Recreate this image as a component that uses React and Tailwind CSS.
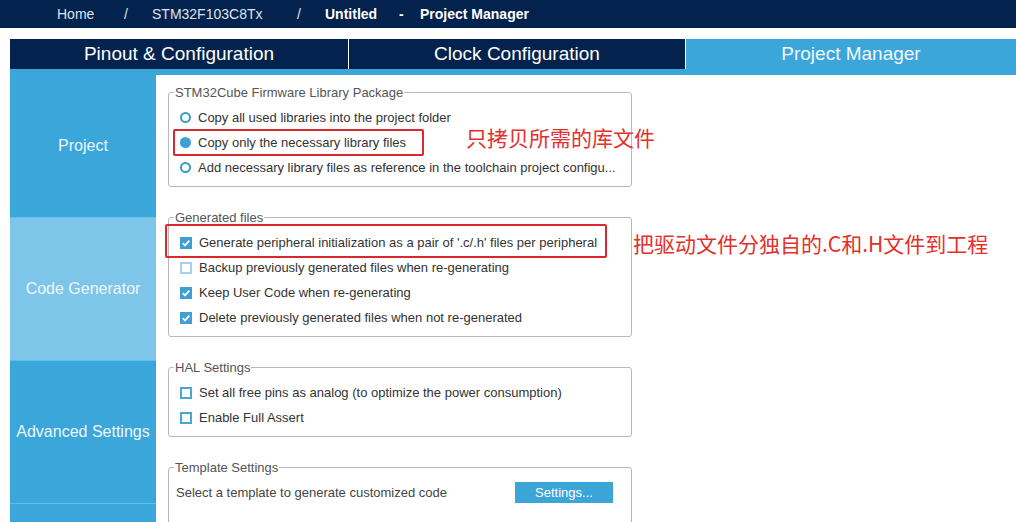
import React from 'react'

const Radio = ({ checked }) =>
  checked ? (
    <span className="w-[11px] h-[11px] rounded-full bg-[#3c9fd6] shrink-0" />
  ) : (
    <span className="w-[11px] h-[11px] rounded-full border-2 border-[#3a9cc9] bg-white shrink-0" />
  )

const Check = ({ checked, light }) =>
  checked ? (
    <span className="w-[12px] h-[12px] bg-[#3f9fd2] shrink-0 flex items-center justify-center">
      <svg width="10" height="10" viewBox="0 0 10 10">
        <path d="M1.8 5.2 L4 7.4 L8.4 2.6" fill="none" stroke="white" strokeWidth="1.7" />
      </svg>
    </span>
  ) : (
    <span className={`w-[12px] h-[12px] border-2 bg-white shrink-0 ${light ? 'border-[#a5d2ea]' : 'border-[#4aa6d4]'}`} />
  )

const Group = ({ title, height, children }) => (
  <div className={`relative border border-[#b9b9b9] rounded-[3px] w-[464px] pl-[11px] pt-[12px] ${height}`}>
    <span className="absolute -top-[8px] left-[5px] bg-white px-[1px] text-[13px] leading-[15px] text-[#555]">
      {title}
    </span>
    {children}
  </div>
)

const Row = ({ icon, children }) => (
  <div className="relative h-[25px] flex items-center gap-[7px] text-[13px] text-[#333]">
    {icon}
    <span>{children}</span>
  </div>
)

const sideItems = [
  { label: 'Project', active: false },
  { label: 'Code Generator', active: true },
  { label: 'Advanced Settings', active: false },
  { label: '', active: false },
]

export default function App() {
  return (
    <div className="w-[1016px] h-[522px] overflow-hidden bg-white font-['Liberation_Sans',Arial,sans-serif]">
      {/* breadcrumb bar */}
      <div className="h-[28px] bg-[#03224d] flex items-center text-[14px] text-[#dfe4ec] pl-[57px] pt-[1px]">
        <span className="w-[67px]">Home</span>
        <span className="w-[28px]">/</span>
        <span className="w-[145px]">STM32F103C8Tx</span>
        <span className="w-[28px]">/</span>
        <span className="w-[74px] font-bold text-white">Untitled</span>
        <span className="w-[21px] font-bold text-white">-</span>
        <span className="font-bold text-white">Project Manager</span>
      </div>

      {/* tabs */}
      <div className="ml-[10px] mt-[11px] h-[30px] flex text-[19px] text-white">
        <div className="w-[338px] bg-[#03224d] flex items-center justify-center">Pinout &amp; Configuration</div>
        <div className="w-px bg-white" />
        <div className="w-[336px] bg-[#03224d] flex items-center justify-center">Clock Configuration</div>
        <div className="w-px bg-white" />
        <div className="flex-1 bg-[#3ba6da] flex items-center justify-center text-[#f2f8fc]">Project Manager</div>
      </div>
      <div className="ml-[10px] h-[6px] bg-[#3ba6da]" />

      <div className="flex">
        {/* sidebar */}
        <div className="ml-[10px] w-[146px] flex flex-col">
          {sideItems.map((item, i) => (
            <div
              key={i}
              className={`h-[143px] shrink-0 border-b border-[#66bfea] flex items-center justify-center text-[16px] text-[#eef7fc] ${
                item.active ? 'bg-[#7dc5e9]' : 'bg-[#3aa6da]'
              }`}
            >
              {item.label}
            </div>
          ))}
        </div>

        {/* content */}
        <div className="relative flex-1 pl-[12px] pt-[17px] flex flex-col gap-[30px]">
          <Group title="STM32Cube Firmware Library Package" height="h-[95px]">
            <Row icon={<Radio />}>Copy all used libraries into the project folder</Row>
            <Row icon={<Radio checked />}>
              Copy only the necessary library files
              <span className="absolute -left-[7px] -top-[1px] -bottom-[1px] w-[251px] border-2 border-[#d9272d] rounded-[2px]" />
            </Row>
            <Row icon={<Radio />}>Add necessary library files as reference in the toolchain project configu...</Row>
          </Group>

          <Group title="Generated files" height="h-[120px]">
            <Row icon={<Check checked />}>
              Generate peripheral initialization as a pair of '.c/.h' files per peripheral
              <span className="absolute -left-[15px] -top-[6px] -bottom-[3px] w-[442px] border-2 border-[#d9272d] rounded-[2px]" />
            </Row>
            <Row icon={<Check light />}>Backup previously generated files when re-generating</Row>
            <Row icon={<Check checked />}>Keep User Code when re-generating</Row>
            <Row icon={<Check checked />}>Delete previously generated files when not re-generated</Row>
          </Group>

          <Group title="HAL Settings" height="h-[70px]">
            <Row icon={<Check />}>Set all free pins as analog (to optimize the power consumption)</Row>
            <Row icon={<Check />}>Enable Full Assert</Row>
          </Group>

          <div className="relative border border-[#b9b9b9] rounded-[3px] w-[464px] h-[80px] pl-[7px] pt-[12px]">
            <span className="absolute -top-[8px] left-[5px] bg-white px-[1px] text-[13px] leading-[15px] text-[#555]">
              Template Settings
            </span>
            <div className="h-[25px] flex items-center text-[13px] text-[#444]">
              <span>Select a template to generate customized code</span>
              <button className="ml-auto mr-[18px] w-[98px] h-[21px] bg-[#3ca5d8] text-white text-[13px]">
                Settings...
              </button>
            </div>
          </div>

          {/* red annotations */}
          <span className="absolute left-[310px] top-[48px] text-[21px] leading-[28px] text-[#e3302b] font-['Noto_Sans_CJK_SC',sans-serif]">
            只拷贝所需的库文件
          </span>
          <span className="absolute left-[477px] top-[154px] text-[21px] leading-[28px] text-[#e3302b] font-['Noto_Sans_CJK_SC',sans-serif]">
            把驱动文件分独自的.C和.H文件到工程
          </span>
        </div>
      </div>
    </div>
  )
}
